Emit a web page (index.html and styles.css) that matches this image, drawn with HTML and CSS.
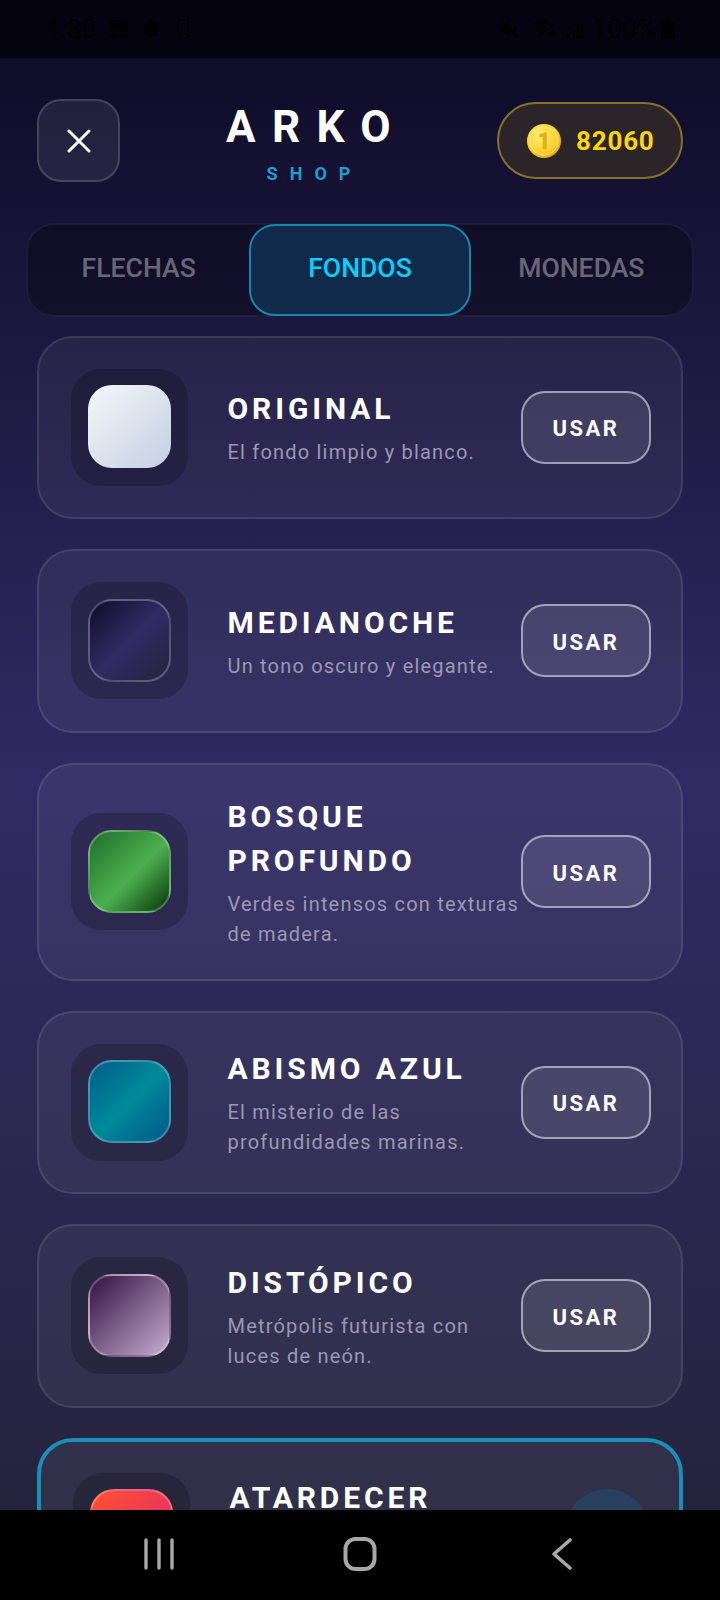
FILE: index.html
```html
<!DOCTYPE html>
<html lang="es">
<head>
    <meta charset="UTF-8">
    <meta name="viewport" content="width=device-width, initial-scale=1.0">
    <title>Arko Shop</title>
    <link rel="stylesheet" href="styles.css">
</head>
<body>

<div class="status-bar">
    <div class="status-group">
        <span class="status-time">1:30</span>
        <svg width="20" height="20" viewBox="0 0 20 20"><rect x="1" y="1" width="18" height="18" rx="3" fill="#000"/><path d="M3 16l5-7 3 4 2-2 4 5z" fill="#04030f"/></svg>
        <svg class="status-gear" width="18" height="18" viewBox="0 0 18 18"><circle cx="9" cy="9" r="5" fill="none" stroke="#000" stroke-width="4"/><path d="M9 0v18M0 9h18M2.6 2.6l12.8 12.8M15.4 2.6L2.6 15.4" stroke="#000" stroke-width="2.5"/></svg>
        <svg class="status-phone" width="12" height="20" viewBox="0 0 12 20"><rect x="1" y="1" width="10" height="18" rx="2" fill="none" stroke="#000" stroke-width="2"/></svg>
    </div>
    <div class="status-group">
        <svg width="21" height="20" viewBox="0 0 21 20"><path d="M1 7h4l6-5v16l-6-5H1z" fill="#000"/><path d="M2 1l17 18M15 6q2 4 0 8" stroke="#000" stroke-width="2" fill="none"/></svg>
        <svg class="status-wifi" width="28" height="20" viewBox="0 0 28 20"><path d="M1 7q11-10 22 0M5 11q7-6 14 0M9 15q3-3 6 0" stroke="#000" stroke-width="2.4" fill="none"/><path d="M23 11v7M20 15l3 3 3-3" stroke="#000" stroke-width="2" fill="none"/></svg>
        <svg class="status-signal" width="18" height="20" viewBox="0 0 18 20"><path d="M2 15v4M8 11v8M12 6v13M16 1v18" stroke="#000" stroke-width="2.2"/></svg>
        <span class="status-percent">100%</span>
        <svg class="status-battery" width="14" height="20" viewBox="0 0 14 20"><path d="M4 0h6v2h3a1 1 0 0 1 1 1v16a1 1 0 0 1-1 1H1a1 1 0 0 1-1-1V3a1 1 0 0 1 1-1h3z" fill="#000"/></svg>
    </div>
</div>

<main class="shop">
    <header class="shop-header">
        <button class="close-btn" type="button" aria-label="Cerrar">
            <svg width="24" height="24" viewBox="0 0 24 24"><path d="M2 2l20 20M22 2L2 22" stroke="#fff" stroke-width="3" stroke-linecap="round"/></svg>
        </button>
        <div class="logo">
            <div class="logo-name">ARKO</div>
            <div class="logo-sub">SHOP</div>
        </div>
        <div class="coins">
            <svg class="coin-icon" width="34" height="34" viewBox="0 0 34 34">
                <defs>
                    <radialGradient id="coinFill" cx="40%" cy="35%" r="70%">
                        <stop offset="0" stop-color="#fff07a"/>
                        <stop offset="0.7" stop-color="#f9d02a"/>
                        <stop offset="1" stop-color="#dfa40e"/>
                    </radialGradient>
                </defs>
                <circle cx="17" cy="17" r="17" fill="url(#coinFill)"/>
                <circle cx="17" cy="17" r="14" fill="none" stroke="#ffe681" stroke-width="1"/>
                <text x="17" y="25" text-anchor="middle" class="coin-digit">1</text>
            </svg>
            <span class="coin-count">82060</span>
        </div>
    </header>

    <nav class="tabs">
        <div class="tab">FLECHAS</div>
        <div class="tab active">FONDOS</div>
        <div class="tab">MONEDAS</div>
    </nav>

    <section class="card-list">
        <article class="card">
            <div class="thumb"><div class="swatch swatch-original"></div></div>
            <div class="info">
                <h3>ORIGINAL</h3>
                <p>El fondo limpio y blanco.</p>
            </div>
            <button class="use-btn" type="button">USAR</button>
        </article>

        <article class="card">
            <div class="thumb"><div class="swatch swatch-midnight"></div></div>
            <div class="info">
                <h3>MEDIANOCHE</h3>
                <p>Un tono oscuro y elegante.</p>
            </div>
            <button class="use-btn" type="button">USAR</button>
        </article>

        <article class="card">
            <div class="thumb"><div class="swatch swatch-forest"></div></div>
            <div class="info">
                <h3>BOSQUE PROFUNDO</h3>
                <p>Verdes intensos con texturas de madera.</p>
            </div>
            <button class="use-btn" type="button">USAR</button>
        </article>

        <article class="card">
            <div class="thumb"><div class="swatch swatch-abyss"></div></div>
            <div class="info">
                <h3>ABISMO AZUL</h3>
                <p>El misterio de las profundidades marinas.</p>
            </div>
            <button class="use-btn" type="button">USAR</button>
        </article>

        <article class="card">
            <div class="thumb"><div class="swatch swatch-dystopia"></div></div>
            <div class="info">
                <h3>DISTÓPICO</h3>
                <p>Metrópolis futurista con luces de neón.</p>
            </div>
            <button class="use-btn" type="button">USAR</button>
        </article>

        <article class="card card-equipped">
            <div class="thumb"><div class="swatch swatch-sunset"></div></div>
            <div class="info">
                <h3>ATARDECER</h3>
            </div>
            <div class="equipped-mark"></div>
        </article>
    </section>
</main>

<div class="nav-bar">
    <svg width="40" height="34" viewBox="0 0 40 34"><path d="M7 3v28M20 3v28M33 3v28" stroke="#a8a8a8" stroke-width="3.4" stroke-linecap="round"/></svg>
    <svg width="40" height="34" viewBox="0 0 40 34"><rect x="5.5" y="2" width="29" height="30" rx="10" fill="none" stroke="#a8a8a8" stroke-width="4"/></svg>
    <svg width="40" height="34" viewBox="0 0 40 34"><path d="M29 3L13 17l16 14" fill="none" stroke="#a8a8a8" stroke-width="3.6" stroke-linecap="round" stroke-linejoin="round"/></svg>
</div>

</body>
</html>
```

FILE: styles.css
```css
* {
    box-sizing: border-box;
}
html, body {
    height: 100%;
}
body {
    margin: 0;
    display: flex;
    flex-direction: column;
    font-family: Roboto, "Noto Sans", sans-serif;
    background-color: #000;
    color: #fff;
    overflow: hidden;
}

/* status bar, almost invisible in the app */
.status-bar {
    flex: 0 0 58px;
    display: flex;
    justify-content: space-between;
    align-items: center;
    padding: 0 45px 0 46px;
    background-color: #04030f;
    color: #000;
}
.status-group {
    display: flex;
    align-items: center;
}
.status-time {
    font-size: 26px;
    margin-right: 13px;
}
.status-percent {
    font-size: 26px;
    margin-right: 5px;
}
.status-gear {
    margin-left: 13px;
}
.status-phone {
    margin-left: 17px;
}
.status-wifi {
    margin-left: 9px;
}
.status-signal {
    margin: 0 9px;
}

.shop {
    flex: 1;
    min-height: 0;
    overflow: hidden;
    padding-top: 41px;
    background: linear-gradient(180deg, #0f0c29 0%, #302b63 50%, #24243e 100%);
}

.shop-header {
    display: flex;
    justify-content: space-between;
    align-items: flex-start;
    padding: 0 37px;
}
.close-btn {
    width: 83px;
    height: 83px;
    display: flex;
    align-items: center;
    justify-content: center;
    padding: 0;
    background-color: rgba(255, 255, 255, 0.08);
    border: 2px solid rgba(255, 255, 255, 0.15);
    border-radius: 24px;
}
.logo {
    padding-top: 6px;
    text-align: center;
}
.logo-name {
    font-size: 44px;
    font-weight: 700;
    line-height: 44px;
    letter-spacing: 16.4px;
    padding-left: 16px;
}
.logo-sub {
    font-size: 18px;
    font-weight: 700;
    line-height: 14px;
    letter-spacing: 12px;
    margin-top: 18px;
    padding-left: 12px;
    color: #1a9fd0;
}
.coins {
    width: 186px;
    height: 77px;
    margin-top: 3px;
    display: flex;
    align-items: center;
    padding-left: 28px;
    background-color: #2b2529;
    border: 2px solid #85722a;
    border-radius: 39px;
}
.coin-digit {
    font-family: Roboto, sans-serif;
    font-size: 23px;
    font-weight: 900;
    fill: #e5ae12;
}
.coin-count {
    margin-left: 15px;
    padding-top: 1px;
    font-size: 26px;
    font-weight: 700;
    letter-spacing: 0.8px;
    color: #ffd60a;
}

.tabs {
    display: flex;
    height: 94px;
    margin: 41px 26px 18.5px 26px;
    background-color: rgba(0, 0, 0, 0.3);
    border: 2px solid rgba(255, 255, 255, 0.06);
    border-radius: 28px;
}
.tab {
    flex: 1;
    margin: -1px 0;
    padding-bottom: 6px;
    display: flex;
    align-items: center;
    justify-content: center;
    font-size: 26.6px;
    font-weight: 500;
    color: #696679;
    border: 2px solid transparent;
    border-radius: 26px;
}
.tab.active {
    color: #00d2ff;
    background-color: #11294a;
    border-color: #1787a8;
}

.card-list {
    display: flex;
    flex-direction: column;
    gap: 30px;
    padding: 0 37px;
}
.card {
    display: flex;
    align-items: center;
    min-height: 183.5px;
    padding: 30px 30px 30px 32px;
    background-color: rgba(255, 255, 255, 0.05);
    border: 2px solid rgba(255, 255, 255, 0.1);
    border-radius: 36px;
}
.card-equipped {
    align-items: flex-start;
    padding-top: 31px;
    background-color: rgba(255, 255, 255, 0.06);
    border: 4px solid #1a8fb8;
}
.thumb {
    flex: 0 0 117px;
    height: 117px;
    display: flex;
    align-items: center;
    justify-content: center;
    padding: 0 1px 1px 0;
    background-color: rgba(0, 0, 0, 0.2);
    border-radius: 30px;
}
.swatch {
    width: 83px;
    height: 83px;
    border-radius: 24px;
    border: 2px solid rgba(255, 255, 255, 0.25);
}
.swatch-original {
    background: linear-gradient(135deg, #f5f7fa, #c3cfe2);
    border: none;
}
.swatch-midnight {
    background: linear-gradient(135deg, #0f0c29, #302b63, #24243e);
}
.swatch-forest {
    background: linear-gradient(135deg, #1e6f2a, #4caf50 55%, #073507);
}
.swatch-abyss {
    background: linear-gradient(135deg, #005c8a, #008a99 50%, #00578a);
}
.swatch-dystopia {
    background: linear-gradient(135deg, #34103f, #c5aed2);
}
.swatch-sunset {
    background: linear-gradient(135deg, #ff512f, #dd2476);
}
.info {
    flex: 1;
    min-width: 0;
    margin-left: 39.5px;
}
.card-equipped .info {
    padding-top: 3px;
}
.info h3 {
    margin: 0 0 6px;
    font-size: 30px;
    font-weight: 700;
    line-height: 44px;
    letter-spacing: 3.9px;
}
.info p {
    margin: 0;
    font-size: 20px;
    line-height: 30px;
    letter-spacing: 1.2px;
    color: #9c98b3;
}
.use-btn {
    flex: 0 0 130px;
    height: 73px;
    padding: 3px 0 0;
    font-family: inherit;
    font-size: 22px;
    font-weight: 700;
    letter-spacing: 2.5px;
    color: #fff;
    background-color: rgba(255, 255, 255, 0.1);
    border: 2px solid rgba(255, 255, 255, 0.5);
    border-radius: 24px;
}
.equipped-mark {
    flex: 0 0 84px;
    height: 84px;
    margin-top: 16px;
    border-radius: 50%;
    background-color: #29405f;
}

.nav-bar {
    flex: 0 0 90px;
    display: flex;
    align-items: center;
    justify-content: center;
    gap: 161px;
    padding-bottom: 3px;
    background-color: #000;
}
```
